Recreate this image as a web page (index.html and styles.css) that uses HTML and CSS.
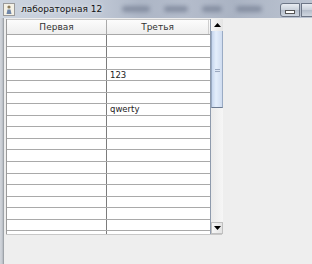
FILE: index.html
```html
<!DOCTYPE html>
<html>
<head>
<meta charset="utf-8">
<link rel="stylesheet" href="styles.css">
</head>
<body>
<div class="window">
  <div class="titlebar">
    <svg class="app-icon" width="12" height="13" viewBox="0 0 12 13">
      <rect x="0.5" y="0.5" width="11" height="12" fill="#f4f1e6" stroke="#9a9a9a"/>
      <circle cx="6" cy="4" r="1.6" fill="#8a7a5a"/>
      <path d="M3.5 11 L4.5 6.5 L7.5 6.5 L8.5 11 Z" fill="#6f86a8"/>
    </svg>
    <span class="title">лабораторная 12</span>
    <div class="blur-area">
      <span class="blob b1"></span>
      <span class="blob b2"></span>
      <span class="blob b3"></span>
      <span class="blob b4"></span>
    </div>
    <div class="controls">
      <div class="btn min"><span class="dash"></span></div>
      <div class="btn max"></div>
    </div>
  </div>
  <div class="body">
    <div class="frame-left"></div>
    <div class="content">
      <div class="scrollpane">
        <div class="table">
          <div class="thead">
            <div class="th">Первая</div>
            <div class="th">Третья</div>
          </div>
          <div class="tbody">
            <div class="tr"><div class="td"></div><div class="td"></div></div>
            <div class="tr"><div class="td"></div><div class="td"></div></div>
            <div class="tr"><div class="td"></div><div class="td"></div></div>
            <div class="tr"><div class="td"></div><div class="td">123</div></div>
            <div class="tr"><div class="td"></div><div class="td"></div></div>
            <div class="tr"><div class="td"></div><div class="td"></div></div>
            <div class="tr"><div class="td"></div><div class="td">qwerty</div></div>
            <div class="tr"><div class="td"></div><div class="td"></div></div>
            <div class="tr"><div class="td"></div><div class="td"></div></div>
            <div class="tr"><div class="td"></div><div class="td"></div></div>
            <div class="tr"><div class="td"></div><div class="td"></div></div>
            <div class="tr"><div class="td"></div><div class="td"></div></div>
            <div class="tr"><div class="td"></div><div class="td"></div></div>
            <div class="tr"><div class="td"></div><div class="td"></div></div>
            <div class="tr"><div class="td"></div><div class="td"></div></div>
            <div class="tr"><div class="td"></div><div class="td"></div></div>
            <div class="tr"><div class="td"></div><div class="td"></div></div>
            <div class="tr"><div class="td"></div><div class="td"></div></div>
          </div>
        </div>
        <div class="scrollbar">
          <div class="arrow up"><svg width="7" height="4" viewBox="0 0 7 4"><path d="M0 4 L3.5 0 L7 4 Z" fill="#000"/></svg></div>
          <div class="track">
            <div class="thumb"><span class="grip"></span></div>
          </div>
          <div class="arrow down"><svg width="7" height="4" viewBox="0 0 7 4"><path d="M0 0 L3.5 4 L7 0 Z" fill="#000"/></svg></div>
        </div>
      </div>
    </div>
  </div>
</div>
</body>
</html>
```
FILE: styles.css
```css
html, body {
  margin: 0;
  padding: 0;
  width: 312px;
  height: 264px;
  overflow: hidden;
  background: #eeeeee;
  font-family: "DejaVu Sans", "Liberation Sans", sans-serif;
}
.window {
  display: flex;
  flex-direction: column;
  width: 312px;
  height: 264px;
}
.titlebar {
  height: 18px;
  flex: none;
  display: flex;
  align-items: center;
  background: linear-gradient(90deg, #ccd4df 0%, #c2cad7 30%, #adb6c6 45%, #b4bccb 60%, #aab3c3 75%, #bdc5d2 100%);
  overflow: hidden;
}
.app-icon {
  margin-left: 3px;
  flex: none;
}
.title {
  flex: none;
  white-space: nowrap;
  margin-left: 6px;
  font-size: 9px;
  color: #111;
  text-shadow: 0 0 4px rgba(255,255,255,0.9);
}
.blur-area {
  flex: 1;
  min-width: 0;
  overflow: hidden;
  height: 18px;
  display: flex;
  align-items: center;
  gap: 14px;
  padding-left: 20px;
}
.blob {
  flex: none;
  height: 6px;
  border-radius: 3px;
  background: #7a8498;
  filter: blur(2px);
  opacity: 0.8;
}
.b1 { width: 28px; }
.b2 { width: 24px; }
.b3 { width: 20px; }
.b4 { width: 26px; }
.controls {
  flex: none;
  display: flex;
  align-self: flex-start;
  margin-top: 3px;
}
.btn {
  height: 12px;
  border: 1px solid #6d7686;
  border-radius: 2px;
  background: linear-gradient(#e8ecf2, #c9d0da 50%, #b3bcc9 51%, #cfd6e0);
  display: flex;
  align-items: center;
  justify-content: center;
}
.btn.min {
  width: 18px;
  margin-right: 1px;
  border-radius: 3px 0 0 3px;
}
.btn.max {
  width: 10px;
  border-right: none;
  border-radius: 0;
}
.dash {
  width: 8px;
  height: 2px;
  margin-top: 4px;
  background: #fff;
  border: 1px solid #555;
}
.body {
  flex: 1;
  display: flex;
}
.frame-left {
  width: 4px;
  flex: none;
  background: linear-gradient(90deg, #d2d6dc, #c4c9d0 60%, #8f949a 75%, #aeb3b8);
}
.content {
  flex: 1;
  background: #eeeeee;
  padding: 1px 0 0 2px;
}
.scrollpane {
  display: flex;
  width: 215px;
  height: 215px;
  border-right: 1px solid #c8c8c8;
  border-bottom: 1px solid #c8c8c8;
}
.table {
  width: 203px;
  flex: none;
  background: #ffffff;
  border-left: 1px solid #9a9a9a;
  overflow: hidden;
}
.thead {
  display: grid;
  grid-template-columns: 100px 102px;
  height: 14px;
  border-top: 1px solid #c8c8c8;
  border-bottom: 1px solid #a8a8a8;
  background: linear-gradient(#fcfcfc, #eeeeee);
}
.th {
  font-size: 9px;
  line-height: 14px;
  text-align: center;
  color: #333;
  border-right: 1px solid #aaaaaa;
}
.th:last-child {
  border-right: 1px solid #cfcfcf;
}
.tr {
  display: grid;
  grid-template-columns: 100px 102px;
  height: 11.55px;
  box-sizing: border-box;
  border-bottom: 1px solid #a9a9a9;
}
.td {
  font-size: 8.5px;
  line-height: 10.5px;
  color: #222;
  padding-left: 3px;
  border-right: 1px solid #7c7c7c;
}
.td:last-child {
  border-right: none;
}
.scrollbar {
  width: 12px;
  flex: none;
  display: flex;
  flex-direction: column;
  background: #f2f2f2;
  border-left: 1px solid #8e9aac;
}
.arrow {
  height: 12px;
  flex: none;
  display: flex;
  align-items: center;
  justify-content: center;
  background: linear-gradient(90deg, #f6f6f6, #e4e4e4);
}
.arrow.down {
  border: 1px solid #c0c0c0;
  height: 10px;
}
.track {
  flex: 1;
  background: linear-gradient(90deg, #eaeaea, #f6f6f6);
}
.thumb {
  height: 77px;
  box-sizing: border-box;
  border: 1px solid #9aabc4;
  border-top: none;
  border-bottom: 1px solid #6c7a90;
  background: linear-gradient(90deg, #c6d6ee, #e4eefb 40%, #cfdcf0);
  display: flex;
  align-items: center;
  justify-content: center;
}
.grip {
  width: 5px;
  height: 4px;
  background: repeating-linear-gradient(#9aa8c0 0 1px, #dde6f4 1px 2px);
  margin-top: 4px;
}
```
